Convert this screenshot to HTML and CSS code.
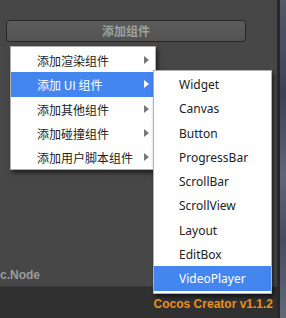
FILE: index.html
```html
<!DOCTYPE html>
<html lang="zh">
<head>
  <meta charset="UTF-8" />
  <meta name="viewport" content="width=device-width, initial-scale=1.0" />
  <title>添加组件</title>
  <link rel="stylesheet" href="styles.css">
</head>
<body>
  <div class="app">
    <div class="panel">
      <div class="panel-body">
        <button class="add-btn">添加组件</button>
        <div class="node-name">c.Node</div>
      </div>
      <div class="footer">Cocos Creator v1.1.2</div>
    </div>
    <div class="divider"></div>
    <div class="scene"></div>
  </div>

  <ul class="menu main-menu">
    <li>添加渲染组件<span class="arrow"></span></li>
    <li class="active">添加 UI 组件<span class="arrow"></span></li>
    <li>添加其他组件<span class="arrow"></span></li>
    <li>添加碰撞组件<span class="arrow"></span></li>
    <li>添加用户脚本组件<span class="arrow"></span></li>
  </ul>

  <ul class="menu sub-menu">
    <li>Widget</li>
    <li>Canvas</li>
    <li>Button</li>
    <li>ProgressBar</li>
    <li>ScrollBar</li>
    <li>ScrollView</li>
    <li>Layout</li>
    <li>EditBox</li>
    <li class="active">VideoPlayer</li>
  </ul>
</body>
</html>
```

FILE: styles.css
```css
body {
  margin: 0;
  width: 286px;
  height: 318px;
  overflow: hidden;
  background: #474747;
  font-family: "Noto Sans", "Noto Sans CJK SC", sans-serif;
  position: relative;
}
.app {
  display: flex;
  height: 318px;
}
.panel {
  width: 277px;
  display: flex;
  flex-direction: column;
}
.panel-body {
  height: 287px;
  padding: 20px 31px 0 6px;
  box-sizing: border-box;
  display: flex;
  flex-direction: column;
  border-bottom: 1px solid #393939;
  background: #474747;
}
.add-btn {
  width: 240px;
  height: 22px;
  padding: 0;
  border: 1px solid #262626;
  border-radius: 3px;
  background: linear-gradient(#5c5c5c, #535353);
  color: #a0a0a0;
  font-family: "Noto Sans CJK SC", sans-serif;
  font-weight: bold;
  font-size: 12px;
  line-height: 20px;
}
.node-name {
  margin-top: auto;
  margin-bottom: 4px;
  margin-left: -6px;
  color: #9c9c9c;
  font-family: "Liberation Sans", sans-serif;
  font-weight: bold;
  font-size: 12px;
  line-height: 14px;
}
.footer {
  flex: 1;
  background: #303030;
  color: #e8901c;
  font-family: "Liberation Sans", sans-serif;
  font-weight: bold;
  font-size: 12px;
  text-align: right;
  padding: 10px 4px 0 0;
  box-sizing: border-box;
}
.divider {
  width: 3px;
  background: #282828;
}
.scene {
  flex: 1;
  background: linear-gradient(#545a68, #3c4252 30%, #5f6676 55%, #464c5c 75%, #626979);
}
.menu {
  position: absolute;
  margin: 0;
  list-style: none;
  background: #fff;
  border: 1px solid #b0b0b0;
  box-shadow: 2px 3px 4px rgba(0, 0, 0, 0.55);
  font-size: 12px;
  color: #222;
}
.menu li {
  height: 24.3px;
  line-height: 26px;
  position: relative;
}
.menu li.active {
  background: #4486f0;
  color: #fff;
}
.main-menu {
  left: 10px;
  top: 46px;
  width: 144px;
  padding: 1px 0 0;
  font-family: "Noto Sans CJK SC", sans-serif;
}
.main-menu li {
  padding-left: 26px;
}
.arrow {
  position: absolute;
  right: 6px;
  top: 8px;
  width: 0;
  height: 0;
  border-top: 4px solid transparent;
  border-bottom: 4px solid transparent;
  border-left: 5px solid #777;
}
.active .arrow {
  border-left-color: #fff;
}
.sub-menu {
  left: 153px;
  top: 70px;
  width: 117px;
  padding: 1px 0 2px;
}
.sub-menu li {
  padding-left: 25px;
}
```
